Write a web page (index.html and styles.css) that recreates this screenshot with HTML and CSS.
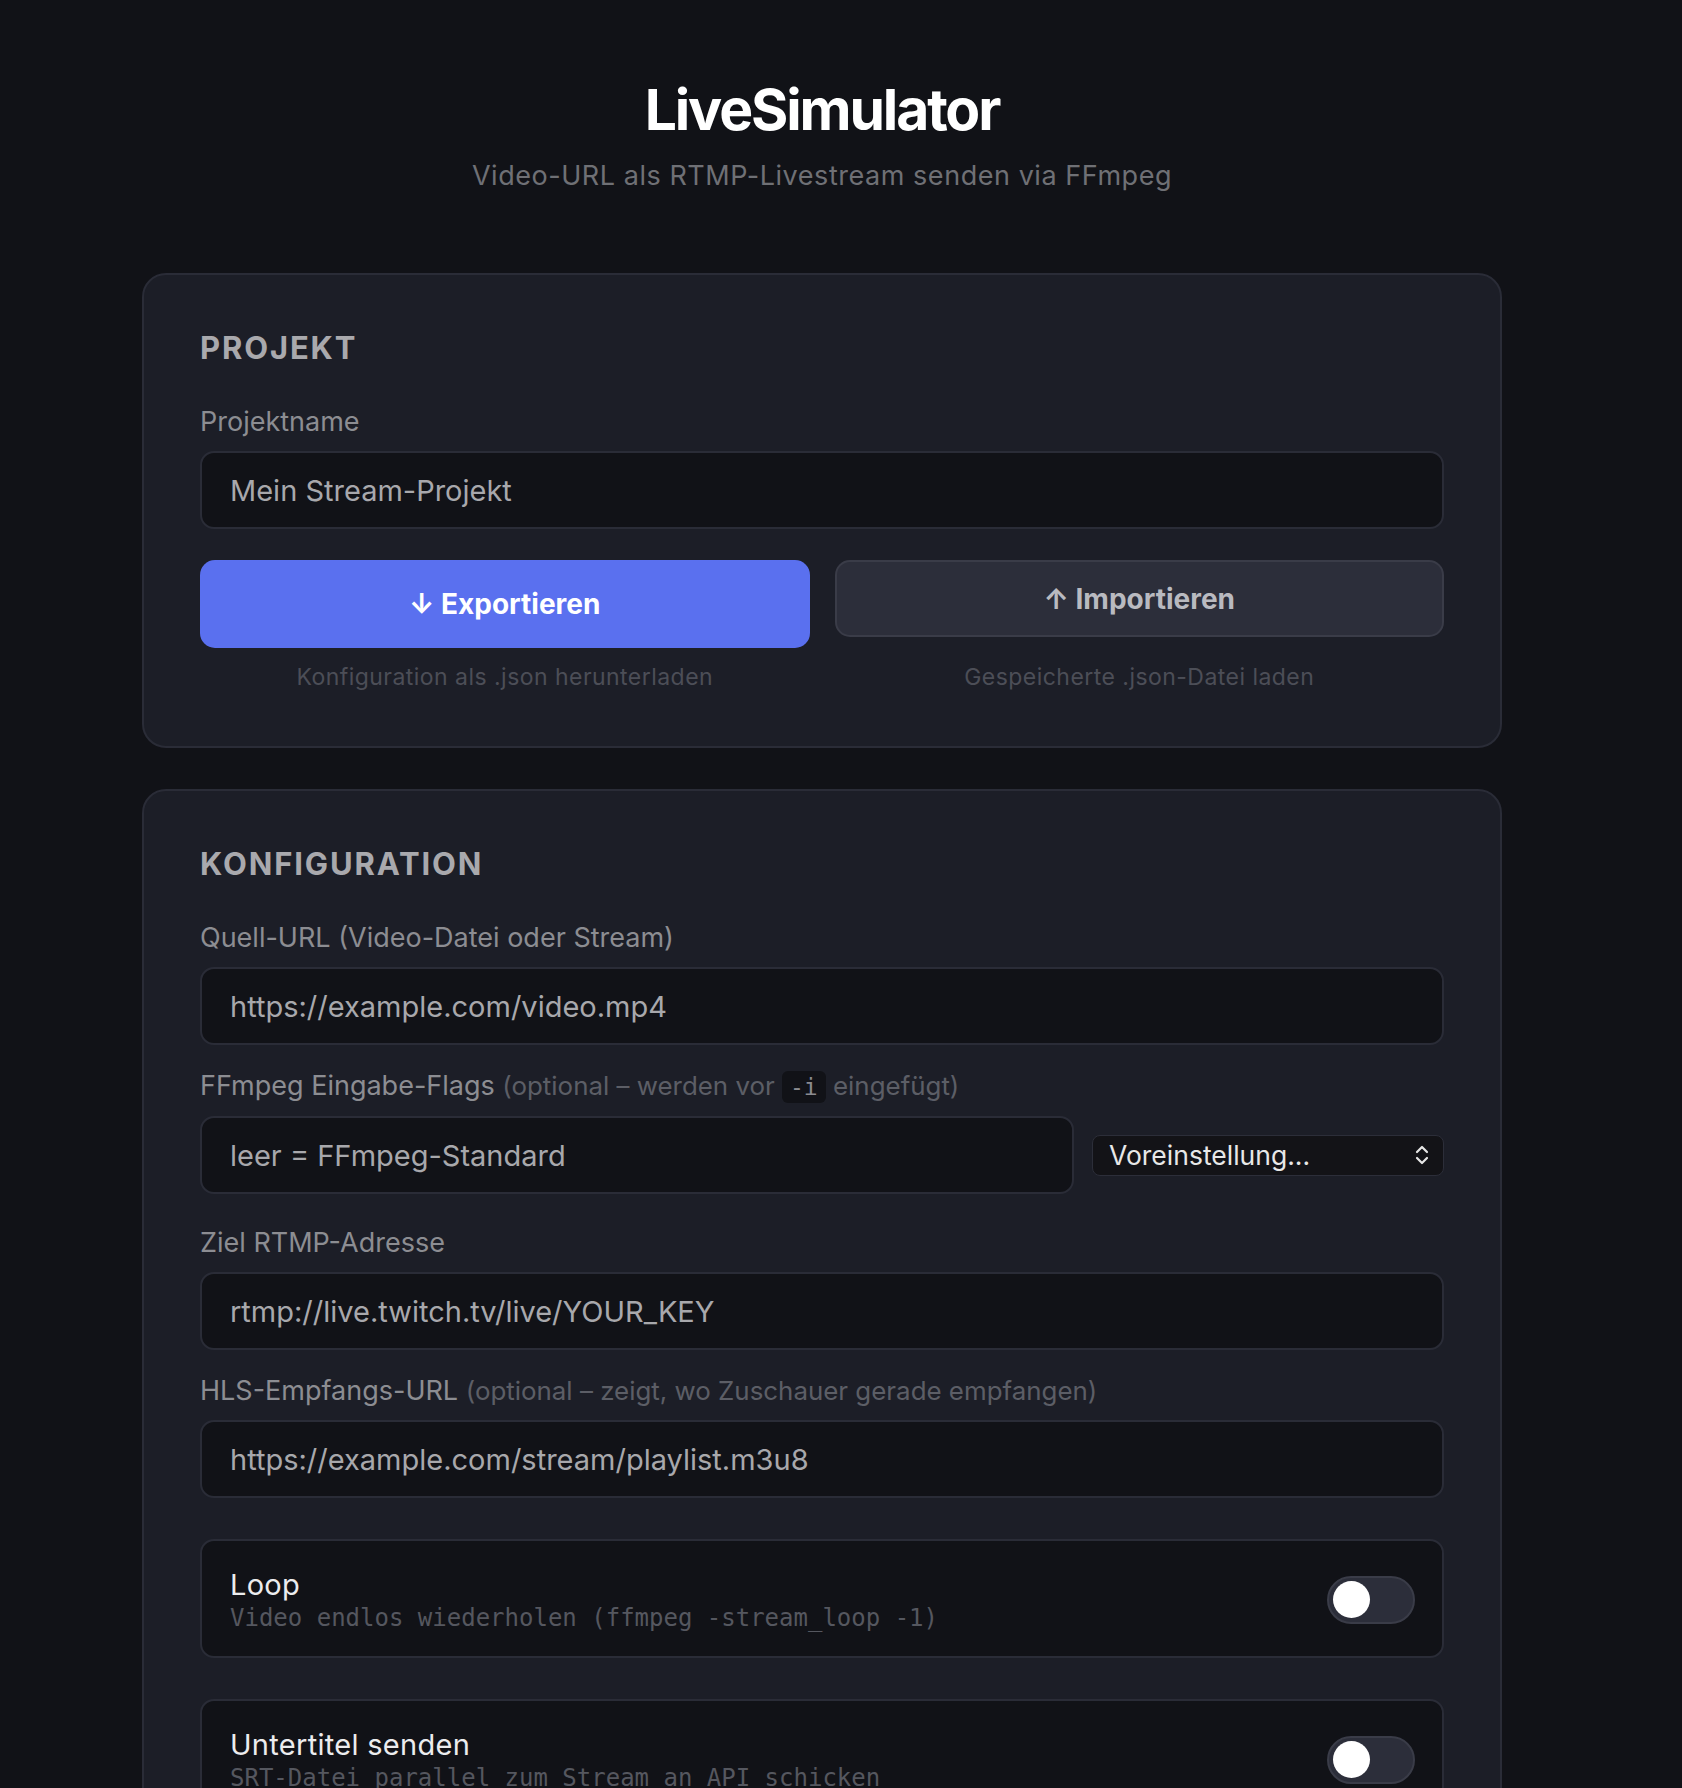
FILE: index.html
```
<!DOCTYPE html>
<html lang="de">
<head>
<meta charset="utf-8">
<title>LiveSimulator</title>
<link rel="stylesheet" href="styles.css">
</head>
<body>
<div class="page">
  <header class="hero">
    <h1 class="title">LiveSimulator</h1>
    <p class="subtitle">Video-URL als RTMP-Livestream senden via FFmpeg</p>
  </header>

  <section class="card">
    <h2 class="card-title">Projekt</h2>
    <label class="label">Projektname</label>
    <input class="input" type="text" placeholder="Mein Stream-Projekt">
    <div class="actions">
      <button class="btn btn-primary" type="button">↓ Exportieren</button>
      <button class="btn btn-secondary" type="button">↑ Importieren</button>
      <p class="hint">Konfiguration als .json herunterladen</p>
      <p class="hint">Gespeicherte .json-Datei laden</p>
    </div>
  </section>

  <section class="card">
    <h2 class="card-title">Konfiguration</h2>

    <div class="field">
      <label class="label">Quell-URL (Video-Datei oder Stream)</label>
      <input class="input" type="text" placeholder="https://example.com/video.mp4">
    </div>

    <div class="field">
      <label class="label">FFmpeg Eingabe-Flags <span class="muted">(optional – werden vor <code class="code">-i</code> eingefügt)</span></label>
      <div class="flags-row">
        <input class="input flags-input" type="text" placeholder="leer = FFmpeg-Standard">
        <div class="select">
          <span>Voreinstellung...</span>
          <svg class="chevrons" width="14" height="22" viewBox="0 0 14 22" fill="none" stroke="#e6e6e6" stroke-width="2.2" stroke-linecap="round" stroke-linejoin="round"><path d="M2 8 L7 3 L12 8"/><path d="M2 14 L7 19 L12 14"/></svg>
        </div>
      </div>
    </div>

    <div class="field field-wide">
      <label class="label">Ziel RTMP-Adresse</label>
      <input class="input" type="text" placeholder="rtmp://live.twitch.tv/live/YOUR_KEY">
    </div>

    <div class="field">
      <label class="label">HLS-Empfangs-URL <span class="muted">(optional – zeigt, wo Zuschauer gerade empfangen)</span></label>
      <input class="input" type="text" placeholder="https://example.com/stream/playlist.m3u8">
    </div>

    <div class="toggle-box">
      <div class="toggle-text">
        <div class="toggle-title">Loop</div>
        <div class="toggle-desc">Video endlos wiederholen (ffmpeg -stream_loop -1)</div>
      </div>
      <div class="switch"><span class="knob"></span></div>
    </div>

    <div class="toggle-box">
      <div class="toggle-text">
        <div class="toggle-title">Untertitel senden</div>
        <div class="toggle-desc">SRT-Datei parallel zum Stream an API schicken</div>
      </div>
      <div class="switch"><span class="knob"></span></div>
    </div>
  </section>
</div>
</body>
</html>
```
FILE: styles.css
```
* { box-sizing: border-box; }

html, body {
  margin: 0;
  background: #111217;
}

body {
  font-family: "Inter", "Noto Sans", sans-serif;
  color: #e8e8ea;
  padding-right: 38px;
}

.page {
  max-width: 1360px;
  margin: 0 auto;
}

.hero {
  text-align: center;
  padding-top: 75px;
  margin-bottom: 80px;
}

.title {
  margin: 0;
  font-size: 57px;
  line-height: 70px;
  font-weight: 700;
  letter-spacing: -0.037em;
  color: #ffffff;
}

.subtitle {
  margin: 14px 0 0;
  font-size: 27px;
  line-height: 34px;
  letter-spacing: 0.02em;
  color: #6f7075;
}

.card {
  background: #1c1e27;
  border: 2px solid #2a2c37;
  border-radius: 24px;
  padding: 53px 56px 54px;
  margin-bottom: 41px;
}

.card-title {
  margin: 0 0 36px;
  font-size: 31px;
  line-height: 40px;
  font-weight: 700;
  text-transform: uppercase;
  letter-spacing: 0.06em;
  color: #a9a9ad;
}

.label {
  display: block;
  font-size: 27px;
  line-height: 36px;
  color: #8c8d92;
  margin-bottom: 11px;
}

.muted {
  font-size: 25.9px;
  color: #5c5e66;
}

.code {
  font-family: "DejaVu Sans Mono", monospace;
  font-size: 23px;
  background: #111217;
  color: #8b8b90;
  border-radius: 6px;
  padding: 3px 8px;
}

.input {
  display: block;
  width: 100%;
  height: 78px;
  padding: 0 28px;
  background: #111217;
  border: 2px solid #2a2c37;
  border-radius: 14px;
  font-family: "Inter", "Noto Sans", sans-serif;
  font-size: 29px;
  color: #e8e8ea;
  outline: none;
}

.input::placeholder { color: #a8a8ac; }

.actions {
  display: grid;
  grid-template-columns: 1fr 1fr;
  column-gap: 25px;
  row-gap: 14px;
  align-items: start;
  margin-top: 31px;
}

.btn {
  font-family: "Inter", "Noto Sans", sans-serif;
  font-size: 28px;
  font-weight: 700;
  border-radius: 15px;
  cursor: pointer;
}

.btn-primary {
  height: 88px;
  background: #5a70ef;
  border: none;
  color: #ffffff;
}

.btn-secondary {
  height: 77px;
  background: #2c2e3a;
  border: 2px solid #3a3c48;
  color: #b9bac0;
}

.hint {
  margin: 0;
  text-align: center;
  font-size: 23px;
  line-height: 30px;
  letter-spacing: 0.02em;
  color: #4c4e57;
}

.field + .field { margin-top: 23px; }
.field-wide { margin-top: 31px !important; }

.flags-row {
  display: flex;
  align-items: center;
  gap: 18px;
}

.flags-input { flex: 1; width: auto; }

.select {
  width: 352px;
  height: 41px;
  display: flex;
  align-items: center;
  justify-content: space-between;
  padding: 0 14px 0 16px;
  background: #131317;
  border: 1px solid #2c2e39;
  border-radius: 8px;
  font-size: 26.5px;
  color: #e8e8e8;
}

.chevrons { display: block; }

.toggle-box {
  display: flex;
  align-items: center;
  justify-content: space-between;
  margin-top: 41px;
  padding: 25px 27px 23px 28px;
  background: #111217;
  border: 2px solid #2a2c37;
  border-radius: 14px;
}

.toggle-title {
  font-size: 29px;
  line-height: 37px;
  letter-spacing: 0.01em;
  color: #ececee;
}

.toggle-desc {
  font-family: "DejaVu Sans Mono", monospace;
  font-size: 24px;
  line-height: 30px;
  color: #55575f;
}

.switch {
  width: 88px;
  height: 48px;
  border-radius: 24px;
  background: #2c2e3a;
  border: 2px solid #3a3c48;
  padding: 3px 4px;
  flex-shrink: 0;
}

.knob {
  display: block;
  width: 37px;
  height: 37px;
  border-radius: 50%;
  background: #ffffff;
}
```
